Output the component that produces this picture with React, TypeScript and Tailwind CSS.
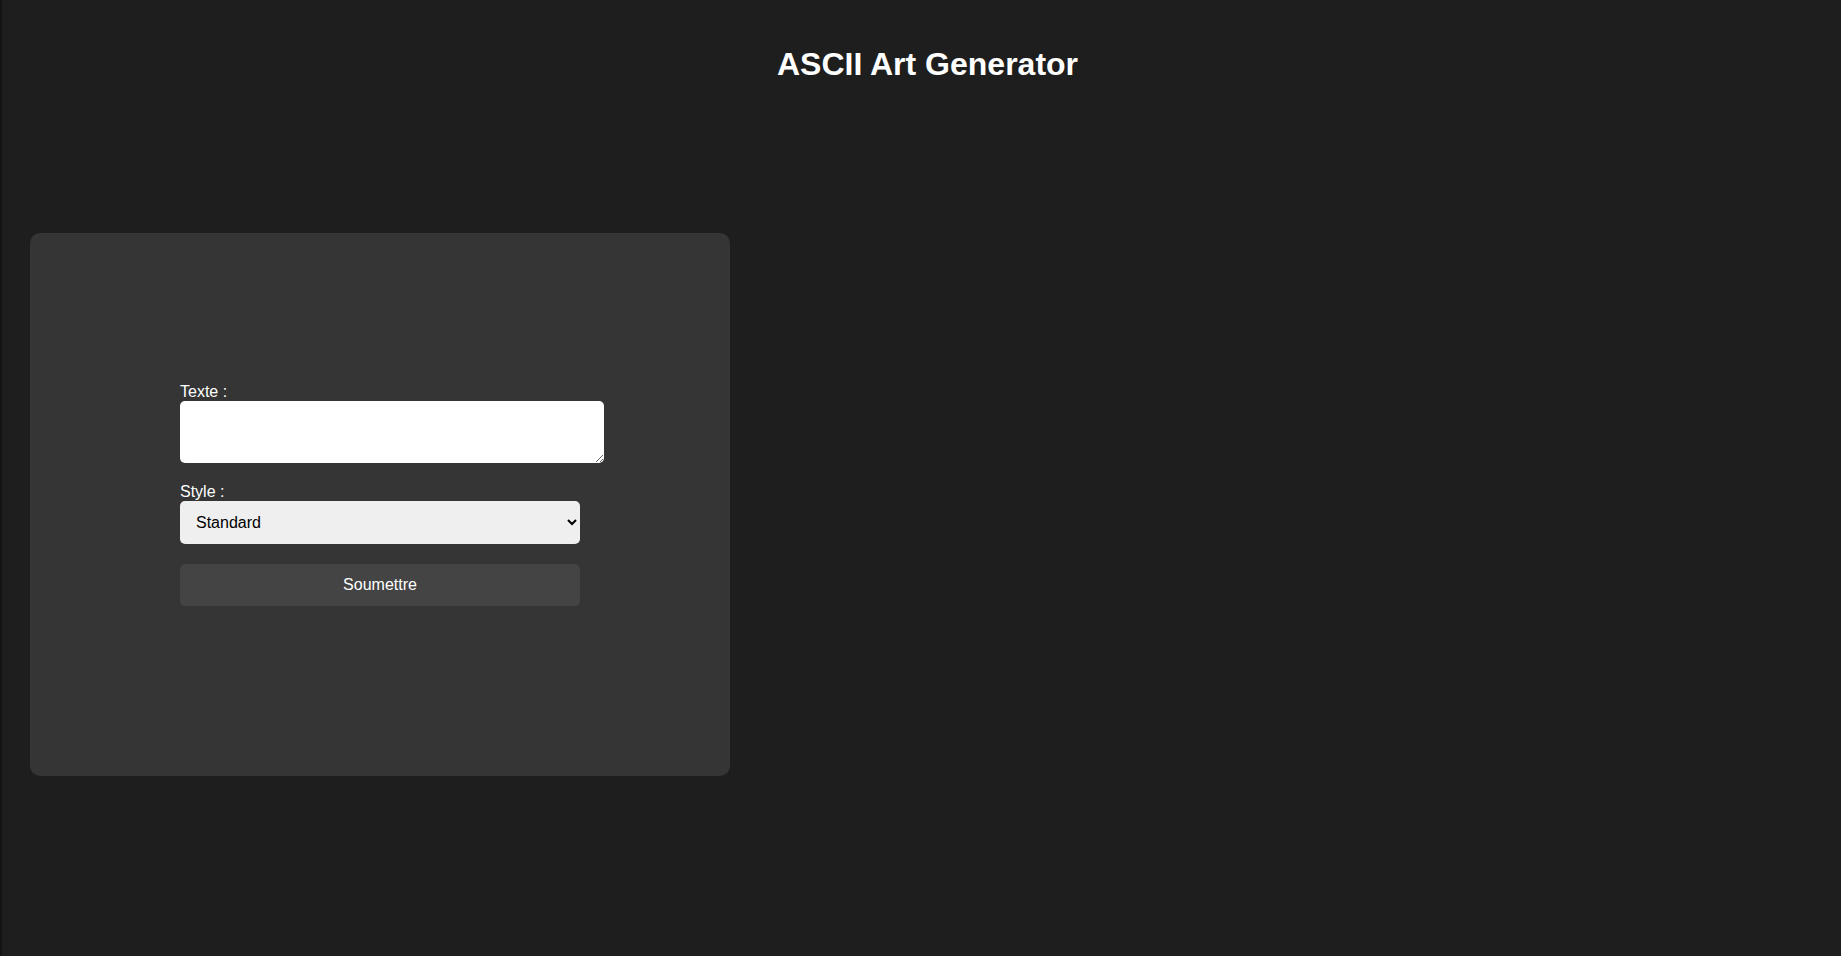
import { useState } from "react";

export default function App() {
  const [text, setText] = useState("");
  const [style, setStyle] = useState("standard");

  return (
    <div className="min-h-screen border-l-2 border-[#141414] bg-[#1e1e1e] pl-7 font-['Liberation_Sans',Arial,sans-serif] text-base leading-[18px] text-white">
      <header className="-ml-4 pt-11">
        <h1 className="text-center text-[32px] leading-10 font-bold">ASCII Art Generator</h1>
      </header>
      <main className="pt-[149px]">
        <section className="w-fit rounded-[10px] bg-[#353535] p-[150px]">
          <form className="w-[400px]" onSubmit={(e) => e.preventDefault()}>
            <label htmlFor="text" className="block">
              Texte :
            </label>
            <textarea
              id="text"
              rows={2}
              value={text}
              onChange={(e) => setText(e.target.value)}
              className="mb-5 block h-[62px] w-[424px] rounded-[5px] bg-white p-3 text-black outline-none"
            />
            <label htmlFor="style" className="block">
              Style :
            </label>
            <select
              id="style"
              value={style}
              onChange={(e) => setStyle(e.target.value)}
              className="mb-5 block h-[43px] w-full rounded-[5px] bg-[#efefef] p-3 text-black"
            >
              <option value="standard">Standard</option>
              <option value="shadow">Shadow</option>
              <option value="thinkertoy">Thinkertoy</option>
            </select>
            <button type="submit" className="mb-5 block w-full rounded-[5px] bg-[#444444] p-3">
              Soumettre
            </button>
          </form>
        </section>
      </main>
    </div>
  );
}
